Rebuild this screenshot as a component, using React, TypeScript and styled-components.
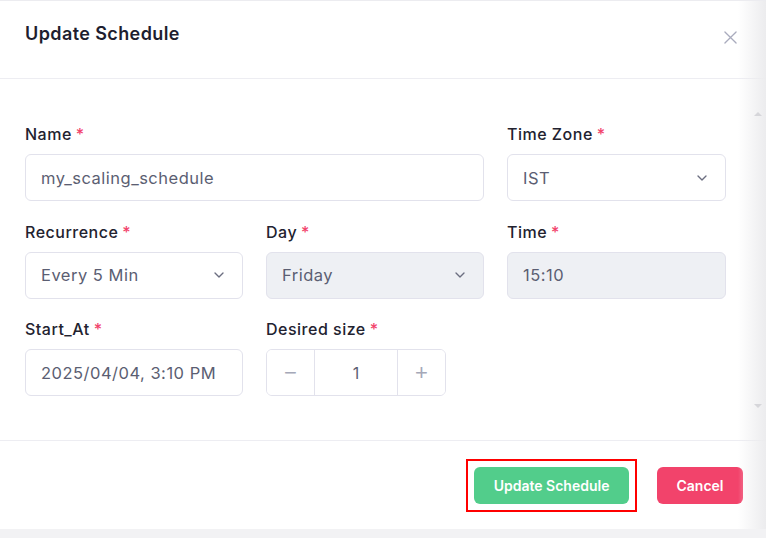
import styled, { createGlobalStyle } from "styled-components";

const GlobalStyle = createGlobalStyle`
  * {
    box-sizing: border-box;
  }

  body {
    margin: 0;
    background-color: #f2f2f4;
    font-family: Inter, "Noto Sans", sans-serif;
  }
`;

const Modal = styled.div`
  position: relative;
  width: 766px;
  height: 529px;
  background-color: #fff;
  border-top: 1px solid #ececf0;
  box-shadow: 0 2px 6px rgba(0, 0, 0, 0.06);
  display: flex;
  flex-direction: column;
`;

const Header = styled.div`
  height: 78px;
  padding: 0 29px 0 25px;
  border-bottom: 1px solid #ededf2;
  display: flex;
  align-items: center;
  justify-content: space-between;
`;

const Title = styled.h2`
  margin: 0 0 12px;
  font-size: 18px;
  font-weight: 600;
  color: #1e1e2f;
  letter-spacing: 0.4px;
`;

const CloseBtn = styled.button`
  border: none;
  background: none;
  padding: 0;
  margin-bottom: 4px;
  display: flex;
  color: #a9abbd;
  cursor: pointer;
`;

const Body = styled.div`
  padding: 45px 40px 44px 25px;
  border-bottom: 1px solid #ededf2;
  display: grid;
  grid-template-columns: 218px 218px 219px;
  column-gap: 23px;
  row-gap: 20.5px;
`;

const Field = styled.div<{ $span?: number }>`
  grid-column: span ${(p) => p.$span ?? 1};
  display: flex;
  flex-direction: column;
  gap: 10px;
`;

const Label = styled.label`
  font-size: 16px;
  font-weight: 500;
  color: #22222f;
  line-height: 20px;
  letter-spacing: 0.5px;
`;

const Req = styled.span`
  color: #f2436b;
  margin-left: 4px;
`;

const Box = styled.div<{ $disabled?: boolean }>`
  height: 47px;
  padding: 0 15px;
  border: 1px solid #e2e2ec;
  border-radius: 6px;
  background-color: ${(p) => (p.$disabled ? "#eef0f4" : "#fff")};
  display: flex;
  align-items: center;
  justify-content: space-between;
  font-size: 16.5px;
  letter-spacing: 0.5px;
  color: #5b5e72;
`;

const Chevron = styled.span`
  display: flex;
  color: #6b6e80;
`;

const Stepper = styled.div`
  width: 180px;
  height: 47px;
  border: 1px solid #e2e2ec;
  border-radius: 6px;
  display: grid;
  grid-template-columns: 47px 1fr 47px;
  overflow: hidden;
`;

const StepBtn = styled.button`
  border: none;
  background: #fff;
  color: #a5a8b8;
  font-size: 22px;
  font-weight: 300;
  display: flex;
  align-items: center;
  justify-content: center;
  cursor: pointer;
  padding: 0;
`;

const StepValue = styled.div`
  border-left: 1px solid #e2e2ec;
  border-right: 1px solid #e2e2ec;
  display: flex;
  align-items: center;
  justify-content: center;
  font-size: 16px;
  color: #5b5e72;
`;

const Footer = styled.div`
  flex: 1;
  padding: 0 23px 0 0;
  display: flex;
  align-items: center;
  justify-content: flex-end;
  gap: 20px;
`;

/* red annotation frame around the highlighted button */
const Highlight = styled.span`
  display: flex;
  padding: 6px;
  border: 2px solid #f00;
`;

const Button = styled.button<{ $variant: "primary" | "danger" }>`
  height: 37px;
  padding: 0 19.5px;
  border: none;
  border-radius: 6px;
  background-color: ${(p) => (p.$variant === "primary" ? "#52cd8b" : "#f2436b")};
  color: #fff;
  font-family: Inter, sans-serif;
  font-size: 14px;
  font-weight: 600;
  cursor: pointer;
`;

const EdgeShade = styled.div`
  position: absolute;
  top: 0;
  right: 0;
  bottom: 0;
  width: 28px;
  background: linear-gradient(to right, rgba(240, 240, 242, 0), #ececee);
  pointer-events: none;
`;

const ScrollArrow = styled.div<{ $top: number; $down?: boolean }>`
  position: absolute;
  right: 4px;
  top: ${(p) => p.$top}px;
  width: 0;
  height: 0;
  border-left: 4px solid transparent;
  border-right: 4px solid transparent;
  ${(p) =>
    p.$down
      ? "border-top: 4px solid #d6d6da;"
      : "border-bottom: 4px solid #d6d6da;"}
`;

function ChevronDown() {
  return (
    <Chevron>
      <svg width="16" height="16" viewBox="0 0 24 24" fill="none" stroke="currentColor" strokeWidth="2" strokeLinecap="round" strokeLinejoin="round">
        <path d="m6 9 6 6 6-6" />
      </svg>
    </Chevron>
  );
}

function App() {
  return (
    <>
      <GlobalStyle />
      <Modal>
        <Header>
          <Title>Update Schedule</Title>
          <CloseBtn aria-label="Close">
            <svg width="13" height="13" viewBox="0 0 14 14" fill="none" stroke="currentColor" strokeWidth="1.4" strokeLinecap="round">
              <path d="M1 1l12 12M13 1L1 13" />
            </svg>
          </CloseBtn>
        </Header>
        <Body>
          <Field $span={2}>
            <Label>
              Name<Req>*</Req>
            </Label>
            <Box>my_scaling_schedule</Box>
          </Field>
          <Field>
            <Label>
              Time Zone<Req>*</Req>
            </Label>
            <Box>
              IST
              <ChevronDown />
            </Box>
          </Field>
          <Field>
            <Label>
              Recurrence<Req>*</Req>
            </Label>
            <Box>
              Every 5 Min
              <ChevronDown />
            </Box>
          </Field>
          <Field>
            <Label>
              Day<Req>*</Req>
            </Label>
            <Box $disabled>
              Friday
              <ChevronDown />
            </Box>
          </Field>
          <Field>
            <Label>
              Time<Req>*</Req>
            </Label>
            <Box $disabled>15:10</Box>
          </Field>
          <Field>
            <Label>
              Start_At<Req>*</Req>
            </Label>
            <Box>2025/04/04, 3:10 PM</Box>
          </Field>
          <Field>
            <Label>
              Desired size<Req>*</Req>
            </Label>
            <Stepper>
              <StepBtn>−</StepBtn>
              <StepValue>1</StepValue>
              <StepBtn>+</StepBtn>
            </Stepper>
          </Field>
        </Body>
        <Footer>
          <Highlight>
            <Button $variant="primary">Update Schedule</Button>
          </Highlight>
          <Button $variant="danger">Cancel</Button>
        </Footer>
        <EdgeShade />
        <ScrollArrow $top={111} />
        <ScrollArrow $top={403} $down />
      </Modal>
    </>
  );
}

export default App;
